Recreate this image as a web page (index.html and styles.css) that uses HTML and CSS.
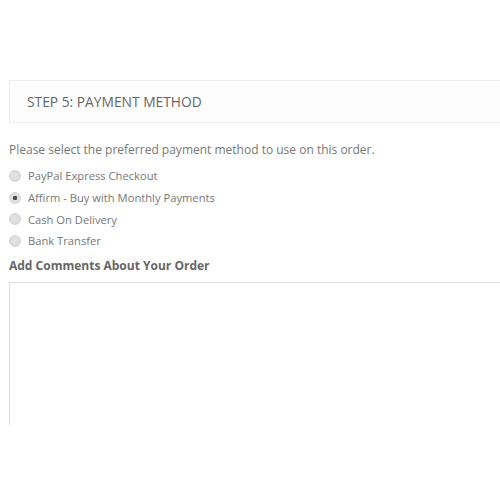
FILE: index.html
```html
<!DOCTYPE html>
<html lang="en">
<head>
    <meta charset="UTF-8">
    <meta name="viewport" content="width=device-width, initial-scale=1.0">
    <title>Checkout</title>
    <link rel="stylesheet" href="styles.css">
</head>
<body>
    <div class="checkout">
        <div class="panel-heading">Step 5: Payment Method</div>

        <div class="panel-body">
            <p class="intro">Please select the preferred payment method to use on this order.</p>

            <div class="radio-list">
                <label class="radio"><input type="radio" name="payment_method" value="pp_express"> PayPal Express Checkout</label>
                <label class="radio"><input type="radio" name="payment_method" value="affirm" checked> Affirm - Buy with Monthly Payments</label>
                <label class="radio"><input type="radio" name="payment_method" value="cod"> Cash On Delivery</label>
                <label class="radio"><input type="radio" name="payment_method" value="bank_transfer"> Bank Transfer</label>
            </div>

            <p class="comments-title">Add Comments About Your Order</p>
            <div class="textarea-wrap">
                <textarea name="comment" class="comment"></textarea>
            </div>
        </div>
    </div>
</body>
</html>
```

FILE: styles.css
```css
body {
    margin: 0;
    background: #fff;
    font-family: "Open Sans", "Liberation Sans", sans-serif;
    color: #777;
    overflow: hidden;
}

.checkout {
    padding: 80px 0 0 9px;
    width: 500px;
}

.panel-heading {
    height: 41px;
    padding-left: 17px;
    line-height: 41px;
    background: #fdfdfd;
    border: 1px solid #eee;
    font-size: 13.8px;
    text-transform: uppercase;
    color: #666;
}

.panel-body {
    padding-top: 18px;
}

.intro {
    margin: 0 0 6px;
    font-size: 12px;
    line-height: 18px;
}

.radio-list {
    display: flex;
    flex-direction: column;
}

.radio {
    display: flex;
    align-items: center;
    gap: 7px;
    height: 21.7px;
    font-size: 11.2px;
}
.radio input {
    appearance: none;
    -webkit-appearance: none;
    margin: 0;
    width: 12px;
    height: 12px;
    border: 1px solid #d4d4d4;
    border-radius: 50%;
    background: radial-gradient(circle, #e4e4e4 0%, #d8d8d8 100%);
    box-sizing: border-box;
}
.radio input:checked {
    background: radial-gradient(circle, #444 0, #555 2px, #e4e4e4 2.6px, #dadada 100%);
}

.comments-title {
    margin: 5px 0 8px;
    font-size: 12px;
    font-weight: bold;
    color: #666;
}

.textarea-wrap {
    height: 143px;
    overflow: hidden;
}
.comment {
    display: block;
    width: 100%;
    height: 200px;
    margin: 0;
    border: 1px solid #ddd;
    background: #fff;
    resize: none;
    box-sizing: border-box;
}
```
